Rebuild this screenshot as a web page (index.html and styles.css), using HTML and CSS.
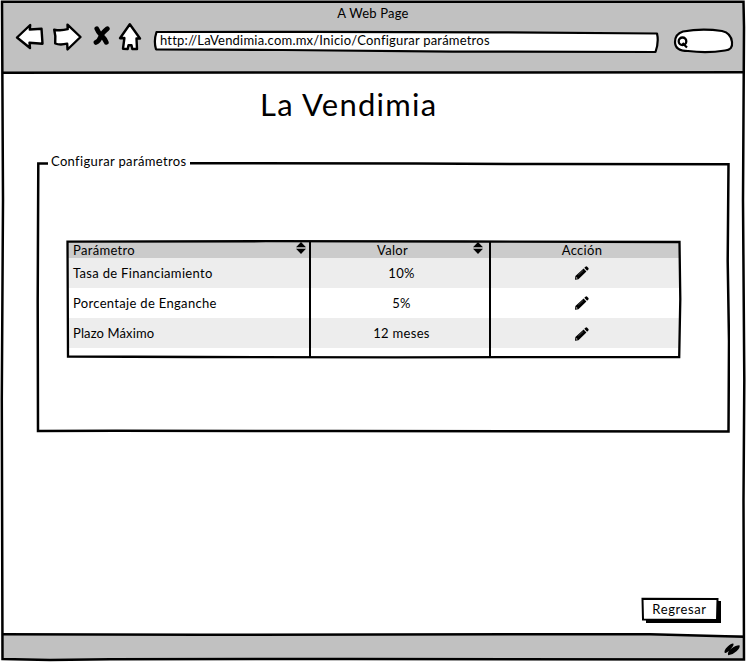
FILE: index.html
```
<!DOCTYPE html>
<html lang="es">
<head>
<meta charset="utf-8">
<title>La Vendimia</title>
<link rel="stylesheet" href="styles.css">
</head>
<body>
<svg class="defs" width="0" height="0" aria-hidden="true">
  <symbol id="pencil" viewBox="0 0 14 14">
    <path d="M0 13.7 .4 10 8.6 2.4 11.4 5.4 3.4 13.2Z M9.3 1.7 10.8.4Q11.5 0 12.2 .7L13.4 2Q14 2.8 13.4 3.4L12.1 4.7Z"/>
    <path d="M1.3 10.9 2.7 12.3 1.2 12.7Z" fill="#e4ddd5"/>
    <path d="M3.3 8.9 8.1 4.5" stroke="#777" stroke-width=".6"/>
  </symbol>
  <symbol id="sort" viewBox="0 0 10 12">
    <path d="M5 0 10 5.2H0ZM0 6.8H10L5 12Z"/>
  </symbol>
</svg>
<div class="window">
  <header class="chrome">
    <div class="chrome-title"><span>A Web Page</span></div>
    <div class="chrome-row">
      <svg class="nav" viewBox="14 20 130 34" fill="#fff" stroke="#000" stroke-width="2.4" stroke-linejoin="round" stroke-linecap="round">
        <path d="M17 37.5 30.2 25 29.8 29.5 41.5 28.7 42.5 43.7 29.5 42.7 30 48Z"/>
        <path d="M54.2 29.7Q61 31 67.7 29.2L67.5 24.7 80.5 37 67.5 49.5 67.2 43.7Q60 45.4 55.2 43.5Q56 36 54.2 29.7Z"/>
        <path d="M96.8 28.7Q98 32 101.5 35.5T106.3 42.3M107.4 28.7Q102 33 100.5 37T96 42.4" fill="none" stroke-width="4.8"/>
        <path d="M129.8 24.3 140 38.5 136.5 38.5 137 49 132.3 49 131.5 45.3 128.5 45.2 127.7 49 123 48.7 124.4 38 120 38.2Z"/>
      </svg>
      <div class="url">
        <svg class="outline" viewBox="0 0 508 26" fill="#fff" stroke="#000" stroke-width="2.2" stroke-linejoin="round"><path d="M3.5 3 160 2.8 340 3.3 504 4.5Q506 13 502.5 23L300 22.6 130 21 3 20.3Q.5 12 3.5 3Z"/></svg>
        <span>http://LaVendimia.com.mx/Inicio/Configurar parámetros</span>
      </div>
      <svg class="search" viewBox="672 26 63 30" fill="#fff" stroke="#000" stroke-width="2.2">
        <path d="M675 42Q675 34 683 31.5Q702 28 722 31Q731 33 732 42Q733 50 725 50.5Q707 53.5 688 51Q675 51 675 42Z"/>
        <circle cx="682.5" cy="41.3" r="3.8" stroke-width="2.3"/><path d="M682.5 43 687 47.5"/>
      </svg>
    </div>
  </header>
  <main>
    <h1><span>La Vendimia</span></h1>
    <section class="group">
      <svg class="outline" viewBox="0 0 694 272" fill="none" stroke="#000" stroke-width="2.5"><path d="M154 2.2 380 2.5 500 3 692.5 3.2 691.7 100 693 180 692.5 270.5 300 270 80 269.7 2 270 1.7 140 2.3 2.5H12"/></svg>
      <h2><span>Configurar parámetros</span></h2>
      <div class="table">
        <div class="row head">
          <div class="c1"><span>Parámetro</span><svg class="sort"><use href="#sort"/></svg></div>
          <div class="c2"><span>Valor</span><svg class="sort"><use href="#sort"/></svg></div>
          <div class="c3"><span>Acción</span></div>
        </div>
        <div class="row shade">
          <div class="c1"><span>Tasa de Financiamiento</span></div>
          <div class="c2"><span>10%</span></div>
          <div class="c3"><svg class="pencil"><use href="#pencil"/></svg></div>
        </div>
        <div class="row">
          <div class="c1"><span>Porcentaje de Enganche</span></div>
          <div class="c2"><span>5%</span></div>
          <div class="c3"><svg class="pencil"><use href="#pencil"/></svg></div>
        </div>
        <div class="row shade last">
          <div class="c1"><span>Plazo Máximo</span></div>
          <div class="c2"><span>12 meses</span></div>
          <div class="c3"><svg class="pencil"><use href="#pencil"/></svg></div>
        </div>
        <svg class="outline" viewBox="0 0 616 120" fill="none" stroke="#000" stroke-width="2.3"><path d="M1.5 2.7 200 2.2 400 2.5 613.5 3 614.3 60 613.2 118 330 118.3 130 118 2 117.5Z"/><path d="M244 2V118M424 2V118" stroke-width="2"/></svg>
      </div>
    </section>
    <div class="actions">
      <button type="button">
        <svg class="outline" viewBox="0 0 80 27"><path d="M5 4H80V26H5Z"/><path d="M1.5 1.7 76.5 2 76 23 2 22.5Z" fill="#fff" stroke="#000" stroke-width="2"/></svg>
        <span>Regresar</span>
      </button>
    </div>
  </main>
  <footer></footer>
  <svg class="outline" viewBox="0 0 746 662" fill="none" stroke="#000" stroke-width="2.5">
    <path d="M2 1.7H743.5L744 27 743 200 744.3 380 743.5 500 744 659.5 350 659 110 659.2 50 660 2.5 659 1.8 400 3 200Z"/>
    <path d="M2 72.7 744 72.3"/>
    <path d="M2 634.3 200 634.7 650 634.2 744 636.8"/>
    <path d="M724.8 653Q723.5 650.5 727.5 646.8T733.3 643.6Q734.5 645 730.5 649.3T724.8 653ZM728.2 655.3Q726.8 652 731.5 648.5T739.5 645.2Q740.5 647.5 736.5 651.3T728.2 655.3Z" fill="#000" stroke="none"/>
  </svg>
</div>
</body>
</html>
```
FILE: styles.css
```
* { box-sizing: border-box; }
body { margin: 0; background: #fff; color: #000; font: 13px/16px Lato, "Open Sans", sans-serif; }
svg { display: block; }
.defs { position: absolute; }
.outline { position: absolute; inset: 0; width: 100%; height: 100%; pointer-events: none; }
.window { position: relative; width: 746px; height: 662px; display: flex; flex-direction: column; padding: 2px; overflow: hidden; }
.chrome { height: 71px; background: #c1c1c1; flex: none; }
.chrome-title { height: 18px; padding-top: 3px; text-align: center; letter-spacing: .2px; }
.chrome-row { display: flex; align-items: flex-start; padding-left: 12px; }
.nav { width: 130px; height: 34px; flex: none; }
.url { position: relative; width: 508px; height: 26px; margin: 9px 0 0 9px; padding: 3px 0 0 7px; letter-spacing: .21px; white-space: nowrap; }
.url span, button span { position: relative; }
.search { width: 63px; height: 30px; margin: 6px 0 0 11px; }
main { flex: 1; display: flex; flex-direction: column; }
h1 { margin: 10px 0 0; padding-left: 258px; height: 79px; font-size: 31px; line-height: 42px; font-weight: 400; letter-spacing: 1.25px; white-space: nowrap; }
h2 { margin: -8px 0 0; padding-left: 15px; height: 86px; font-size: 13px; line-height: 16px; font-weight: 400; letter-spacing: .35px; }
.group { position: relative; width: 694px; height: 272px; margin: -1px 0 0 34px; }
.table { position: relative; width: 616px; height: 120px; margin-left: 30px; padding: 2px; }
.row { display: grid; grid-template-columns: 242px 180px 188px; height: 30px; align-items: center; }
.row.head { height: 17px; background: #cbcbcb; }
.shade { background: #ededed; }
.c1, .c2, .c3 { display: flex; align-items: center; }
.c1 { justify-content: space-between; padding: 0 4px 0 5px; letter-spacing: .32px; }
.c2 { justify-content: center; padding-left: 3px; letter-spacing: .3px; }
.head .c2 { justify-content: space-between; padding: 0 7px 0 67px; }
.c3 { justify-content: center; padding-right: 4px; letter-spacing: .3px; }
.last .c1 { letter-spacing: .12px; }
.last .c3 { padding-top: 2px; }
.sort { width: 10px; height: 12px; margin-top: -4px; }
.pencil { width: 14px; height: 14px; }
.actions { display: flex; justify-content: flex-end; margin-top: 164px; padding-right: 23px; }
button { position: relative; width: 80px; height: 27px; padding: 0 3px 3px 0; border: 0; background: none; color: #000; font: inherit; letter-spacing: .6px; }
footer { height: 25px; background: #c1c1c1; flex: none; }
```
